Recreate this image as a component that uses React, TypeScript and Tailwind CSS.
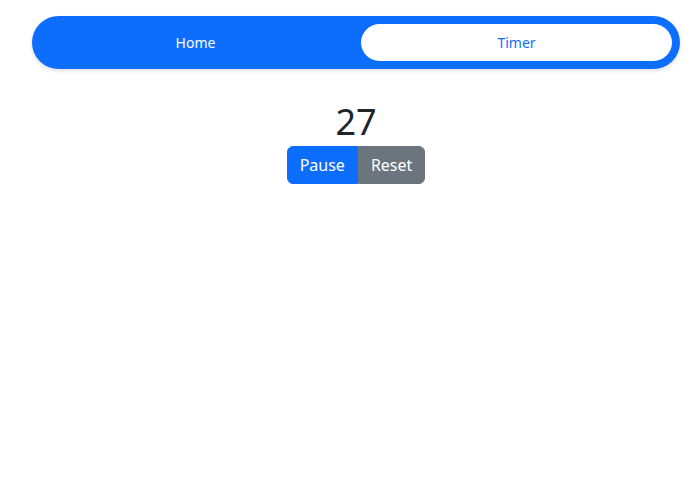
import React, { useState } from 'react';

export default function App() {
  const [tab, setTab] = useState<'home' | 'timer'>('timer');
  const [count] = useState(27);

  return (
    <div className="min-h-[500px] bg-white font-['Noto_Sans',sans-serif] text-[#212529]">
      <div className="ml-8 w-[648px] pt-4">
        {/* Nav pills */}
        <nav className="grid grid-cols-2 gap-[10px] rounded-full bg-[#0d6efd] p-2 shadow-[0_2px_4px_rgba(0,0,0,0.12)]">
          <button
            onClick={() => setTab('home')}
            className={
              tab === 'home'
                ? 'rounded-full bg-white px-4 py-2 text-sm leading-[21px] text-[#0d6efd]'
                : 'rounded-full px-4 py-2 text-sm leading-[21px] text-white'
            }
          >
            Home
          </button>
          <button
            onClick={() => setTab('timer')}
            className={
              tab === 'timer'
                ? 'rounded-full bg-white px-4 py-2 text-sm leading-[21px] text-[#0d6efd]'
                : 'rounded-full px-4 py-2 text-sm leading-[21px] text-white'
            }
          >
            Timer
          </button>
        </nav>

        {/* Timer */}
        <div className="mt-[31px] flex flex-col items-center">
          <h1 className="text-[36px] leading-[43px] font-normal">{count}</h1>
          <div className="mt-[3px] flex">
            <button className="rounded-l-md border border-[#0d6efd] bg-[#0d6efd] px-3 py-[6px] text-base leading-6 text-white">
              Pause
            </button>
            <button className="rounded-r-md border border-[#6c757d] bg-[#6c757d] px-3 py-[6px] text-base leading-6 text-white">
              Reset
            </button>
          </div>
        </div>
      </div>
    </div>
  );
}
